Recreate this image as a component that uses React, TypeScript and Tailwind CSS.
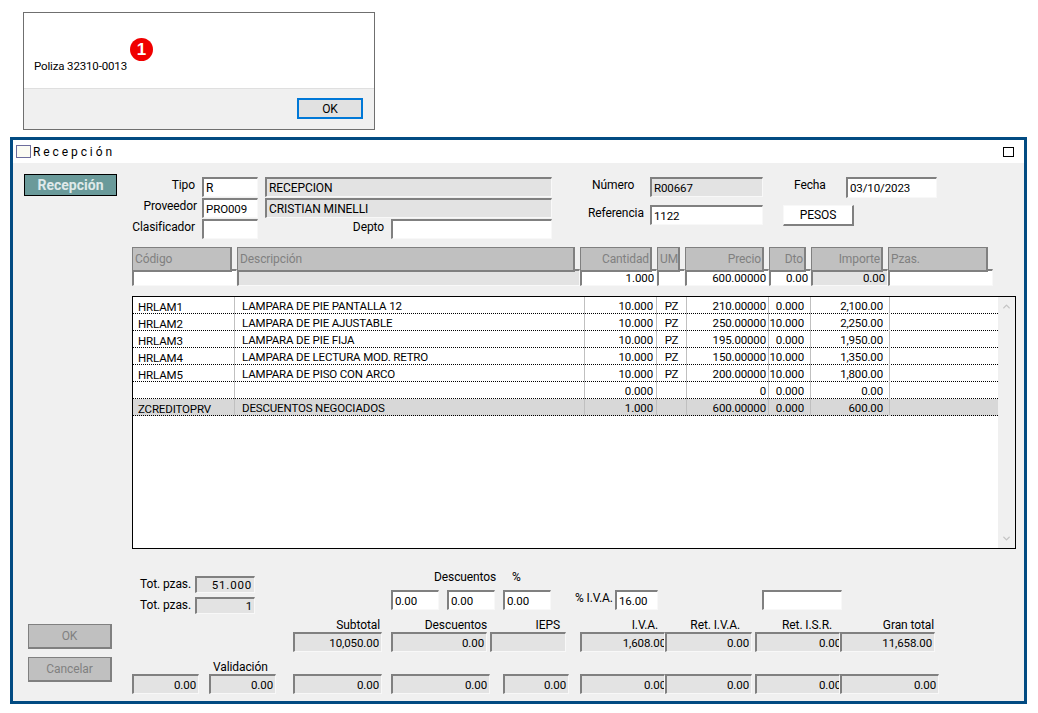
import { ReactNode } from 'react';
import { ChevronDown, ChevronUp } from 'lucide-react';

interface FieldProps {
  className: string;
  children?: ReactNode;
  gray?: boolean;
  right?: boolean;
  flush?: boolean;
  wide?: boolean;
}

// sunken win32 edit box
function Field({ className, children, gray, right, flush, wide }: FieldProps) {
  return (
    <div
      className={`flex items-center shrink-0 overflow-hidden whitespace-nowrap border-t-2 border-l-2 border-r border-b border-t-[#808080] border-l-[#808080] border-r-[#f8f8f8] border-b-[#f8f8f8] ${
        gray ? 'bg-[#e3e3e3]' : 'bg-white'
      } ${right ? 'justify-end' : 'pl-[2px]'} ${right && !flush ? 'pr-[2px]' : ''} ${
        wide ? '' : 'text-[11.5px]'
      } ${className}`}
    >
      {flush ? <span className="-mr-[2px]">{children}</span> : children}
    </div>
  );
}

function Head({ className, children, right }: { className: string; children: string; right?: boolean }) {
  return (
    <div
      className={`h-[25px] shrink-0 flex items-center bg-[#c0c0c0] text-[#808080] border border-[#808080] border-r-2 border-b-2 ${
        right ? 'justify-end pr-[1px]' : 'pl-[2px]'
      } ${className}`}
    >
      {children}
    </div>
  );
}

const rows = [
  ['HRLAM1', 'LAMPARA DE PIE PANTALLA 12', '10.000', 'PZ', '210.00000', '0.000', '2,100.00'],
  ['HRLAM2', 'LAMPARA DE PIE AJUSTABLE', '10.000', 'PZ', '250.00000', '10.000', '2,250.00'],
  ['HRLAM3', 'LAMPARA DE PIE FIJA', '10.000', 'PZ', '195.00000', '0.000', '1,950.00'],
  ['HRLAM4', 'LAMPARA DE LECTURA MOD. RETRO', '10.000', 'PZ', '150.00000', '10.000', '1,350.00'],
  ['HRLAM5', 'LAMPARA DE PISO CON ARCO', '10.000', 'PZ', '200.00000', '10.000', '1,800.00'],
  ['', '', '0.000', '', '0', '0.000', '0.00'],
  ['ZCREDITOPRV', 'DESCUENTOS NEGOCIADOS', '1.000', '', '600.00000', '0.000', '600.00'],
];

function TableRow({ row, selected }: { row: string[]; selected: boolean }) {
  const cell = 'h-[17px] flex items-center whitespace-nowrap border-r border-[#c0c0c0]';
  return (
    <div
      className={`grid grid-cols-[102px_350px_72px_30px_82px_42px_79px_1fr] border-b border-dotted border-black h-[17px] text-[11.5px] tracking-[-0.15px] ${
        selected ? 'bg-[#d8d8d8]' : ''
      }`}
    >
      <div className={`${cell} pl-[5px] pt-[3px]`}>{row[0]}</div>
      <div className={`${cell} pl-[7px]`}>{row[1]}</div>
      <div className={`${cell} justify-end pr-[3px]`}>{row[2]}</div>
      <div className={`${cell} justify-center`}>{row[3]}</div>
      <div className={`${cell} justify-end pr-[2px]`}>{row[4]}</div>
      <div className={`${cell} justify-end pr-[6px]`}>{row[5]}</div>
      <div className={`${cell} justify-end pr-[6px]`}>{row[6]}</div>
      <div />
    </div>
  );
}

export default function App() {
  return (
    <div className="w-[1038px] h-[713px] bg-white overflow-hidden text-[12px] tracking-[-0.1px] leading-[16px] text-black font-['Roboto','Liberation_Sans',sans-serif] pt-[12px]">
      {/* dialogo */}
      <div className="relative ml-[23px] w-[352px] h-[118px] border border-[#6f6f6f] flex flex-col">
        <div className="h-[75px] bg-white flex items-end pl-[10px] pb-[14px] text-[11.5px] tracking-[-0.15px]">Poliza 32310-0013</div>
        <div className="flex-1 bg-[#f0f0f0] border-t border-[#dfdfdf] flex justify-end pr-[11px] pt-[9px]">
          <button className="w-[66px] h-[21px] bg-[#e1e1e1] border-2 border-[#0078d7] flex items-center justify-center">OK</button>
        </div>
        <div className="absolute left-[106px] top-[25px] w-[23px] h-[23px] rounded-full bg-[#f00000] text-white font-bold text-[17px] flex items-center justify-center font-['Liberation_Sans',sans-serif]">
          1
        </div>
      </div>

      {/* ventana */}
      <div className="ml-[10px] mt-[7px] w-[1017px] h-[567px] border-[3px] border-[#024b82] flex flex-col">
        <div className="h-[23px] bg-white flex items-center pl-[3px] pr-[10px] shrink-0">
          <div className="w-[15px] h-[13px] border border-[#6d6d9c] bg-[#fbfbf3] mr-[2px]" />
          <span className="tracking-[2.9px]">Recepción</span>
          <div className="ml-auto w-[11px] h-[10px] border border-black" />
        </div>

        <div className="flex-1 bg-[#f0f0f0] flex">
          {/* lateral */}
          <div className="w-[119px] shrink-0 pl-[11px] pt-[11px]">
            <div className="w-[93px] h-[22px] bg-[#6a9a9a] border border-black text-[#dfe9e9] font-bold text-[14px] tracking-normal flex items-center justify-center">
              Recepción
            </div>
            <div className="mt-[428px] w-[84px] h-[25px] ml-[4px] bg-[#c0c0c0] border border-[#808080] border-r-2 border-b-2 text-[#808080] flex items-center justify-center">
              OK
            </div>
            <div className="mt-[8px] w-[84px] h-[25px] ml-[4px] bg-[#c0c0c0] border border-[#808080] border-r-2 border-b-2 text-[#808080] flex items-center justify-center">
              Cancelar
            </div>
          </div>

          <div className="flex-1">
            {/* encabezado */}
            <div className="flex h-[62px] mt-[14px]">
              <div className="w-[420px] shrink-0 flex flex-col">
                <div className="flex h-[21px]">
                  <div className="w-[63px] text-right">Tipo</div>
                  <Field wide className="ml-[7px] w-[56px] h-[20px]">R</Field>
                  <Field wide gray className="ml-[7px] w-[287px] h-[20px]">RECEPCION</Field>
                </div>
                <div className="flex h-[21px]">
                  <div className="w-[65px] text-right">Proveedor</div>
                  <Field className="ml-[5px] w-[56px] h-[20px]">PRO009</Field>
                  <Field wide gray className="ml-[7px] w-[287px] h-[20px]">CRISTIAN MINELLI</Field>
                </div>
                <div className="flex h-[20px]">
                  <div className="w-[63px] text-right">Clasificador</div>
                  <Field className="ml-[7px] w-[56px] h-[20px]" />
                  <div className="w-[126px] text-right">Depto</div>
                  <Field className="ml-[7px] w-[161px] h-[20px]" />
                </div>
              </div>
              <div className="w-[211px] shrink-0 pl-[36px]">
                <div className="flex h-[28px]">
                  <div className="w-[62px] pl-[4px]">Número</div>
                  <Field gray className="w-[113px] h-[20px]">R00667</Field>
                </div>
                <div className="flex">
                  <div className="w-[62px]">Referencia</div>
                  <Field className="w-[113px] h-[20px]">1122</Field>
                </div>
              </div>
              <div className="flex-1">
                <div className="flex h-[28px]">
                  <div className="w-[52px] ml-[31px]">Fecha</div>
                  <Field className="w-[91px] h-[21px]">03/10/2023</Field>
                </div>
                <div className="ml-[20px] w-[71px] h-[21px] bg-white border border-[#f8f8f8] border-r-2 border-b-2 border-r-[#808080] border-b-[#808080] flex items-center justify-center">
                  PESOS
                </div>
              </div>
            </div>

            {/* captura */}
            <div className="relative z-10 flex gap-[5px] mt-[8px]">
              <Head className="w-[100px]">Código</Head>
              <Head className="w-[338px]">Descripción</Head>
              <Head right className="w-[72px]">Cantidad</Head>
              <Head className="w-[23px]">UM</Head>
              <Head right className="w-[79px]">Precio</Head>
              <Head right className="w-[37px]">Dto</Head>
              <Head right className="w-[72px]">Importe</Head>
              <Head className="w-[100px]">Pzas.</Head>
            </div>
            <div className="flex -mt-[3px]">
              <Field className="w-[105px] h-[17px]" />
              <Field gray className="w-[343px] h-[17px]" />
              <Field right className="w-[77px] h-[17px]">1.000</Field>
              <Field className="w-[28px] h-[17px]" />
              <Field right className="w-[84px] h-[17px]">600.00000</Field>
              <Field right className="w-[42px] h-[17px]">0.00</Field>
              <Field gray right className="w-[77px] h-[17px]">0.00</Field>
              <Field className="w-[105px] h-[17px]" />
            </div>

            {/* lista */}
            <div className="mt-[10px] w-[884px] h-[253px] border border-black bg-white flex">
              <div className="w-[865px] shrink-0">
                {rows.map((row, i) => (
                  <TableRow key={i} row={row} selected={i === 6} />
                ))}
              </div>
              <div className="flex-1 bg-[#f0f0f0] flex flex-col items-center justify-between py-[4px]">
                <ChevronUp className="w-[11px] h-[11px] text-[#c4c4c4]" strokeWidth={3} />
                <ChevronDown className="w-[11px] h-[11px] text-[#c4c4c4]" strokeWidth={3} />
              </div>
            </div>

            {/* totales */}
            <div className="flex mt-[20px] h-[44px]">
              <div className="w-[259px] shrink-0 pt-[7px] pl-[8px]">
                <div className="flex h-[21px]">
                  <div className="w-[55px]">Tot. pzas.</div>
                  <Field gray right className="w-[60px] h-[17px] tracking-[0.8px]">51.000</Field>
                </div>
                <div className="flex">
                  <div className="w-[55px]">Tot. pzas.</div>
                  <Field gray right className="w-[60px] h-[17px]">1</Field>
                </div>
              </div>
              <div className="w-[184px] shrink-0">
                <div className="flex h-[21px]">
                  <div className="ml-[43px] w-[78px]">Descuentos</div>
                  <div>%</div>
                </div>
                <div className="flex gap-[8px]">
                  <Field className="w-[48px] h-[20px]">0.00</Field>
                  <Field className="w-[48px] h-[20px]">0.00</Field>
                  <Field className="w-[48px] h-[20px]">0.00</Field>
                </div>
              </div>
              <div className="flex pt-[21px]">
                <div className="w-[40px] whitespace-nowrap">% I.V.A.</div>
                <Field className="w-[43px] h-[20px]">16.00</Field>
                <Field className="ml-[104px] w-[80px] h-[20px]" />
              </div>
            </div>

            <div className="flex mt-[6px] pl-[161px]">
              <div className="w-[89px]">
                <div className="h-[13px] text-right pr-[2px] leading-[13px]">Subtotal</div>
                <Field gray right className="w-[89px] h-[20px]">10,050.00</Field>
              </div>
              <div className="w-[96px] ml-[9px]">
                <div className="h-[13px] text-right leading-[13px]">Descuentos</div>
                <Field gray right className="w-[96px] h-[20px]">0.00</Field>
              </div>
              <div className="w-[76px] ml-[3px]">
                <div className="h-[13px] text-right pr-[6px] leading-[13px]">IEPS</div>
                <Field gray className="w-[76px] h-[20px]" />
              </div>
              <div className="w-[85px] ml-[14px]">
                <div className="h-[13px] text-right pr-[7px] leading-[13px]">I.V.A.</div>
                <Field gray right flush className="w-[85px] h-[20px]">1,608.00</Field>
              </div>
              <div className="w-[87px]">
                <div className="h-[13px] text-right pr-[12px] leading-[13px]">Ret. I.V.A.</div>
                <Field gray right className="w-[87px] h-[20px]">0.00</Field>
              </div>
              <div className="w-[85px] ml-[3px]">
                <div className="h-[13px] text-right pr-[8px] leading-[13px]">Ret. I.S.R.</div>
                <Field gray right flush className="w-[85px] h-[20px]">0.00</Field>
              </div>
              <div className="w-[95px]">
                <div className="h-[13px] text-right pr-[1px] leading-[13px]">Gran total</div>
                <Field gray right className="w-[95px] h-[20px]">11,658.00</Field>
              </div>
            </div>

            <div className="flex mt-[9px]">
              <div className="w-[67px] mt-[13px]">
                <Field gray right className="w-[67px] h-[20px]">0.00</Field>
              </div>
              <div className="w-[67px] ml-[10px]">
                <div className="h-[13px] pl-[4px] leading-[13px]">Validación</div>
                <Field gray right className="w-[67px] h-[20px]">0.00</Field>
              </div>
              <div className="flex mt-[13px] ml-[17px]">
                <Field gray right className="w-[89px] h-[20px]">0.00</Field>
                <Field gray right className="ml-[9px] w-[99px] h-[20px]">0.00</Field>
                <Field gray right className="ml-[13px] w-[66px] h-[20px]">0.00</Field>
                <Field gray right flush className="ml-[11px] w-[85px] h-[20px]">0.00</Field>
                <Field gray right className="w-[87px] h-[20px]">0.00</Field>
                <Field gray right flush className="ml-[3px] w-[85px] h-[20px]">0.00</Field>
                <Field gray right className="w-[99px] h-[20px]">0.00</Field>
              </div>
            </div>
          </div>
        </div>
      </div>
    </div>
  );
}
